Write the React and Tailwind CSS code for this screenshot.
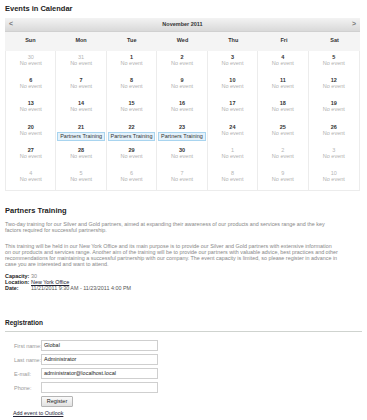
import React from "react";

const weeks = [
  [
    { d: 30, o: true },
    { d: 31, o: true },
    { d: 1 },
    { d: 2 },
    { d: 3 },
    { d: 4 },
    { d: 5 },
  ],
  [6, 7, 8, 9, 10, 11, 12].map((d) => ({ d })),
  [13, 14, 15, 16, 17, 18, 19].map((d) => ({ d })),
  [
    { d: 20 },
    { d: 21, ev: true },
    { d: 22, ev: true },
    { d: 23, ev: true },
    { d: 24 },
    { d: 25 },
    { d: 26 },
  ],
  [
    { d: 27 },
    { d: 28 },
    { d: 29 },
    { d: 30 },
    { d: 1, o: true },
    { d: 2, o: true },
    { d: 3, o: true },
  ],
  [4, 5, 6, 7, 8, 9, 10].map((d) => ({ d, o: true })),
];

const days = ["Sun", "Mon", "Tue", "Wed", "Thu", "Fri", "Sat"];

const Cell = ({ day }) => (
  <div className="h-[23.2px] border-r border-[#ececec] last:border-r-0 flex flex-col items-center pt-[3px]">
    <div
      className={
        day.o
          ? "text-[5.5px] leading-[6px] text-[#b5b5b5]"
          : "text-[5.5px] leading-[6px] font-bold text-[#333]"
      }
    >
      {day.d}
    </div>
    {day.ev ? (
      <div className="mt-[2px] w-[calc(100%-2px)] h-[9px] bg-[#e4f2fb] border border-[#a8d4ef] text-[5.5px] leading-[7px] text-[#333] text-center">
        Partners Training
      </div>
    ) : (
      <div className="text-[5.5px] leading-[6px] text-[#b0b0b0]">No event</div>
    )}
  </div>
);

const Field = ({ label, value }) => (
  <div className="flex items-center h-[11px] mb-[3px]">
    <div className="w-[27px] ml-[9px] whitespace-nowrap text-[5.5px] text-[#999]">{label}</div>
    <div className="w-[117px] h-[11px] border border-[#cfcfcf] bg-white text-[5.5px] leading-[9px] px-[2px] text-[#222]">
      {value}
    </div>
  </div>
);

export default function App() {
  return (
    <div
      className="w-[367px] h-[420px] bg-white px-[5px] overflow-hidden text-[#333]"
      style={{ fontFamily: '"Liberation Sans", Arial, sans-serif' }}
    >
      <h2 className="pt-[4px] text-[7.5px] leading-[9px] font-bold text-[#222]">
        Events in Calendar
      </h2>

      <div className="mt-[5px] w-[355px]">
        <div className="h-[14px] bg-gradient-to-b from-[#f3f3f3] to-[#d9d9d9] border-b border-[#d0d0d0] flex items-center justify-between px-[4px]">
          <span className="text-[7px] font-bold text-[#777]">&lt;</span>
          <span className="text-[5.5px] font-bold text-[#333]">November 2011</span>
          <span className="text-[7px] font-bold text-[#777]">&gt;</span>
        </div>
        <div className="grid grid-cols-7 h-[19px] bg-[#f4f4f4]">
          {days.map((d) => (
            <div key={d} className="text-center pt-[4px] text-[5.5px] font-bold text-[#333]">
              {d}
            </div>
          ))}
        </div>
        <div className="border-l border-r border-b border-[#ececec]">
          {weeks.map((w, i) => (
            <div key={i} className="grid grid-cols-7">
              {w.map((day, j) => (
                <Cell key={j} day={day} />
              ))}
            </div>
          ))}
        </div>
      </div>

      <h2 className="mt-[15px] text-[7.5px] leading-[9px] font-bold text-[#222]">
        Partners Training
      </h2>
      <p className="mt-[6px] text-[5.4px] leading-[6px] text-[#888] whitespace-nowrap">
        Two-day training for our Silver and Gold partners, aimed at expanding their awareness of our
        products and services range and the key
        <br />
        factors required for successful partnership.
      </p>
      <p className="mt-[10px] text-[5.4px] leading-[6px] text-[#888] whitespace-nowrap">
        This training will be held in our New York Office and its main purpose is to provide our Silver
        and Gold partners with extensive information
        <br />
        on our products and services range. Another aim of the training will be to provide our partners
        with valuable advice, best practices and other
        <br />
        recommendations for maintaining a successful partnership with our company. The event capacity is
        limited, so please register in advance in
        <br />
        case you are interested and want to attend.
      </p>

      <div className="mt-[6px] text-[5.4px] leading-[6px]">
        <div className="flex">
          <span className="w-[26px] font-bold text-[#222]">Capacity:</span>
          <span className="text-[#888]">30</span>
        </div>
        <div className="flex">
          <span className="w-[26px] font-bold text-[#222]">Location:</span>
          <span className="underline text-[#223]">New York Office</span>
        </div>
        <div className="flex">
          <span className="w-[26px] font-bold text-[#222]">Date:</span>
          <span className="text-[#555]">11/21/2011 9:30 AM - 11/23/2011 4:00 PM</span>
        </div>
      </div>

      <h2 className="mt-[28px] text-[6.5px] leading-[8px] font-bold text-[#222]">Registration</h2>
      <div className="mt-[4px] h-[1px] bg-[#cfd3cf] w-[357px]" />

      <div className="mt-[8px]">
        <Field label="First name:" value="Global" />
        <Field label="Last name:" value="Administrator" />
        <Field label="E-mail:" value="administrator@localhost.local" />
        <Field label="Phone:" value="" />
        <div className="ml-[36px] w-[32px] h-[11px] border border-[#b5b5b5] rounded-[1px] bg-gradient-to-b from-[#fafafa] to-[#e2e2e2] text-[5.5px] leading-[9px] text-center text-[#222]">
          Register
        </div>
        <div className="mt-[3px] ml-[8px] text-[5.4px] leading-[6px] underline text-[#223]">
          Add event to Outlook
        </div>
      </div>
    </div>
  );
}
